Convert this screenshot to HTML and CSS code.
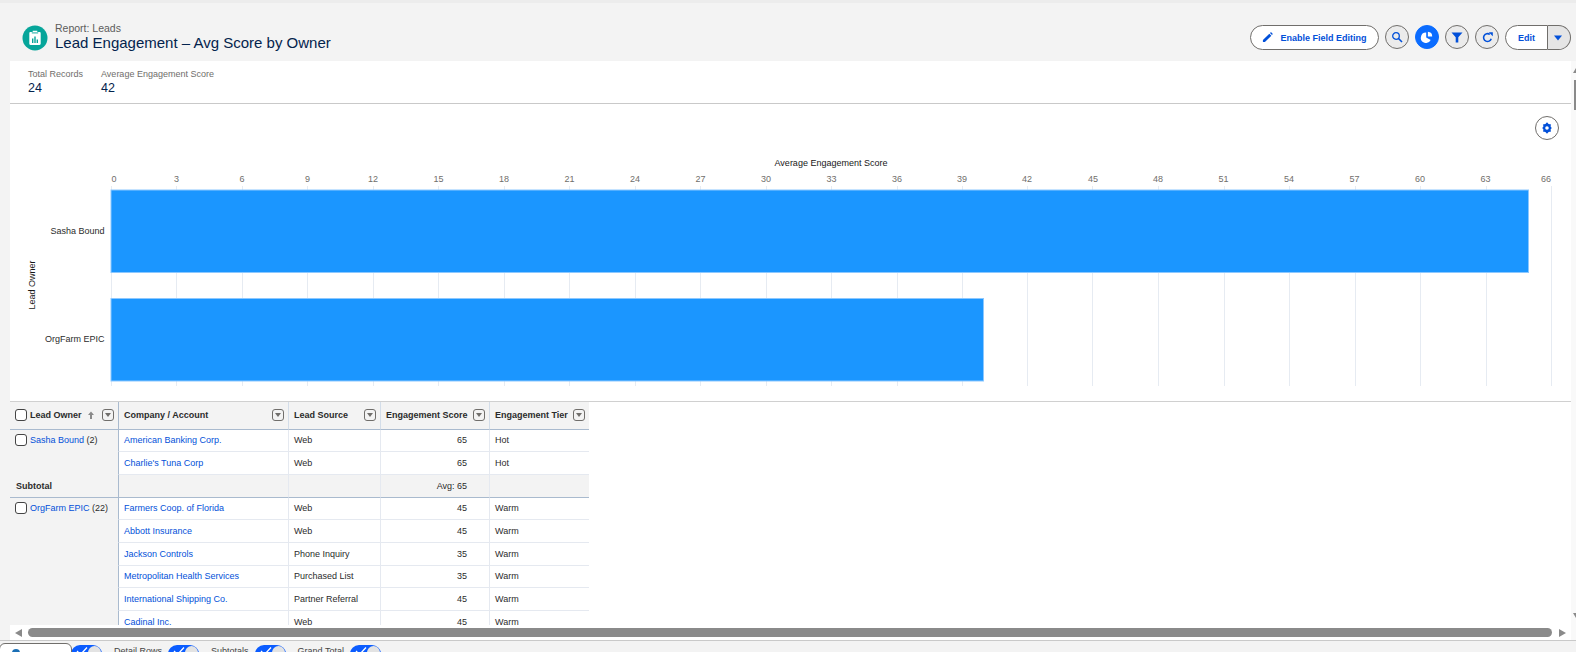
FILE: index.html
```html
<!DOCTYPE html>
<html lang="en">
<head>
<meta charset="utf-8">
<title>Lead Engagement – Avg Score by Owner</title>
<link rel="stylesheet" href="styles.css">
</head>
<body>
<div class="page">
  <header class="page-header">
    <div class="title-group">
      <span class="report-icon">
        <svg viewBox="0 0 26 26" width="26" height="26"><circle cx="13" cy="13" r="12.5" fill="#06a59a"/><path d="M8.5 7h2.2V5.8h4.6V7h2.2c.7 0 1.2.5 1.2 1.2v10.6c0 .7-.5 1.2-1.2 1.2h-9c-.7 0-1.2-.5-1.2-1.2V8.2C7.3 7.500 7.800 7 8.500 7z" fill="#fff"/><rect x="9.800" y="7" width="6.400" height="1.700" fill="#06a59a" opacity=".55"/><path d="M10 13.500h1.400V18H10zM12.300 11.500h1.400V18h-1.400zM14.600 14.500H16V18h-1.400z" fill="#06a59a"/></svg>
      </span>
      <div class="titles">
        <div class="eyebrow">Report: Leads</div>
        <h1 class="title">Lead Engagement – Avg Score by Owner</h1>
      </div>
    </div>
    <div class="actions">
      <button class="btn-pill"><svg viewBox="0 0 12 12" width="11" height="11"><path d="M1 8.800 8 1.800l2.200 2.200-7 7H1zM8.700 1.100l.6-.5c.3-.3.7-.3 1 0l1.100 1.100c.3.300.3.700 0 1l-.5.600z" fill="#0250d9"/></svg>Enable Field Editing</button>
      <button class="btn-round"><svg viewBox="0 0 12 12" width="12" height="12"><circle cx="5" cy="5" r="3.300" fill="none" stroke="#0250d9" stroke-width="1.300"/><path d="M7.500 7.500 11 11" stroke="#0250d9" stroke-width="1.600"/></svg></button>
      <button class="btn-round btn-active"><svg viewBox="0 0 14 14" width="14" height="14"><path d="M6.200 2.600v5l4.500 2.500A5.200 5.200 0 1 1 6.200 2.600z" fill="#fff"/><path d="M7.900 1.800a4.600 4.600 0 0 1 4.300 4.600H7.900z" fill="#fff"/></svg></button>
      <button class="btn-round"><svg viewBox="0 0 14 14" width="14" height="14"><path d="M1.500 2.500h11L8.300 7.200V12.500H5.700V7.200z" fill="#0250d9"/></svg></button>
      <button class="btn-round"><svg viewBox="0 0 14 14" width="13" height="13"><path d="M11 8.300A4.200 4.200 0 1 1 9.500 3.700" fill="none" stroke="#0250d9" stroke-width="1.700"/><path d="M8.300 1.300h4.400v4.400z" fill="#0250d9"/></svg></button>
      <div class="split">
        <button class="split-main">Edit</button>
        <button class="split-caret"><svg viewBox="0 0 10 6" width="10" height="6"><path d="M1 .5h8L5 5.500z" fill="#0250d9"/></svg></button>
      </div>
    </div>
  </header>

  <div class="body-row">
    <main class="content">
      <section class="metrics">
        <div class="metric"><div class="metric-label">Total Records</div><div class="metric-value">24</div></div>
        <div class="metric"><div class="metric-label">Average Engagement Score</div><div class="metric-value">42</div></div>
      </section>

      <section class="chart">
        <button class="chart-gear"><svg viewBox="0 0 12 12" width="12" height="12"><path fill-rule="evenodd" d="M6 .3 7.600 2.100 10.100 2.400 9.500 4.300 10.700 6 9.500 7.700 10.100 9.600 7.600 9.900 6 11.700 4.400 9.900 1.900 9.600 2.500 7.700 1.300 6 2.500 4.300 1.900 2.400 4.400 2.100zM6 4.200a1.800 1.800 0 1 0 0 3.600 1.800 1.800 0 0 0 0-3.600z" fill="#0250d9"/></svg></button>
        <svg class="chart-svg" viewBox="10 104 1561 297" width="1561" height="297">
          <g class="grid">
            <line x1="111.500" x2="111.500" y1="186" y2="386"/><line x1="176.500" x2="176.500" y1="186" y2="386"/><line x1="242.500" x2="242.500" y1="186" y2="386"/><line x1="307.500" x2="307.500" y1="186" y2="386"/><line x1="373.500" x2="373.500" y1="186" y2="386"/><line x1="438.500" x2="438.500" y1="186" y2="386"/><line x1="504.500" x2="504.500" y1="186" y2="386"/><line x1="569.500" x2="569.500" y1="186" y2="386"/><line x1="635.500" x2="635.500" y1="186" y2="386"/><line x1="700.500" x2="700.500" y1="186" y2="386"/><line x1="766.500" x2="766.500" y1="186" y2="386"/><line x1="831.500" x2="831.500" y1="186" y2="386"/><line x1="897.500" x2="897.500" y1="186" y2="386"/><line x1="962.500" x2="962.500" y1="186" y2="386"/><line x1="1027.500" x2="1027.500" y1="186" y2="386"/><line x1="1092.500" x2="1092.500" y1="186" y2="386"/><line x1="1158.500" x2="1158.500" y1="186" y2="386"/><line x1="1224.500" x2="1224.500" y1="186" y2="386"/><line x1="1289.500" x2="1289.500" y1="186" y2="386"/><line x1="1355.500" x2="1355.500" y1="186" y2="386"/><line x1="1420.500" x2="1420.500" y1="186" y2="386"/><line x1="1486.500" x2="1486.500" y1="186" y2="386"/><line x1="1551.500" x2="1551.500" y1="186" y2="386"/>
          </g>
          <rect class="bar" x="111" y="190" width="1417.500" height="82.500"/>
          <rect class="bar" x="111" y="298.500" width="872.500" height="82.500"/>
          <g class="ticks">
            <text x="111.500">0</text><text class="mid" x="176.500">3</text><text class="mid" x="242">6</text><text class="mid" x="307.500">9</text><text class="mid" x="373">12</text><text class="mid" x="438.500">15</text><text class="mid" x="504">18</text><text class="mid" x="569.500">21</text><text class="mid" x="635">24</text><text class="mid" x="700.500">27</text><text class="mid" x="766">30</text><text class="mid" x="831.500">33</text><text class="mid" x="897">36</text><text class="mid" x="962">39</text><text class="mid" x="1027">42</text><text class="mid" x="1093">45</text><text class="mid" x="1158">48</text><text class="mid" x="1223.500">51</text><text class="mid" x="1289">54</text><text class="mid" x="1354.500">57</text><text class="mid" x="1420">60</text><text class="mid" x="1485.500">63</text><text class="end" x="1551">66</text>
          </g>
          <text class="axis-title" x="831" y="166">Average Engagement Score</text>
          <text class="cat" x="104.500" y="234">Sasha Bound</text>
          <text class="cat" x="104.500" y="342">OrgFarm EPIC</text>
          <text class="axis-title" transform="translate(35 285) rotate(-90)">Lead Owner</text>
        </svg>
      </section>

      <section class="table-wrap">
        <table class="report">
          <colgroup><col class="c1"><col class="c2"><col class="c3"><col class="c4"><col class="c5"></colgroup>
          <thead>
            <tr>
              <th class="group-col"><div class="th-in"><span class="th-left"><span class="check"></span>Lead Owner<svg class="sort" viewBox="0 0 8 10" width="8" height="10"><path d="M4 1.500 7 5H5v4H3V5H1z" fill="#8a8a8a"/></svg></span><span class="mini"></span></div></th>
              <th class="first"><div class="th-in">Company / Account<span class="mini"></span></div></th>
              <th><div class="th-in">Lead Source<span class="mini"></span></div></th>
              <th><div class="th-in">Engagement Score<span class="mini"></span></div></th>
              <th><div class="th-in">Engagement Tier<span class="mini"></span></div></th>
            </tr>
          </thead>
          <tbody>
            <tr>
              <td class="group-col" rowspan="2"><span class="group-in"><span class="check"></span><span><a href="#">Sasha Bound</a> (2)</span></span></td>
              <td class="first"><a href="#">American Banking Corp.</a></td><td>Web</td><td class="num">65</td><td>Hot</td>
            </tr>
            <tr><td class="first"><a href="#">Charlie's Tuna Corp</a></td><td>Web</td><td class="num">65</td><td>Hot</td></tr>
            <tr class="subtotal"><td class="group-col"><b>Subtotal</b></td><td class="first"></td><td></td><td class="num">Avg: 65</td><td></td></tr>
            <tr>
              <td class="group-col" rowspan="6"><span class="group-in"><span class="check"></span><span><a href="#">OrgFarm EPIC</a> (22)</span></span></td>
              <td class="first"><a href="#">Farmers Coop. of Florida</a></td><td>Web</td><td class="num">45</td><td>Warm</td>
            </tr>
            <tr><td class="first"><a href="#">Abbott Insurance</a></td><td>Web</td><td class="num">45</td><td>Warm</td></tr>
            <tr><td class="first"><a href="#">Jackson Controls</a></td><td>Phone Inquiry</td><td class="num">35</td><td>Warm</td></tr>
            <tr><td class="first"><a href="#">Metropolitan Health Services</a></td><td>Purchased List</td><td class="num">35</td><td>Warm</td></tr>
            <tr><td class="first"><a href="#">International Shipping Co.</a></td><td>Partner Referral</td><td class="num">45</td><td>Warm</td></tr>
            <tr><td class="first"><a href="#">Cadinal Inc.</a></td><td>Web</td><td class="num">45</td><td>Warm</td></tr>
          </tbody>
        </table>
      </section>

      <div class="hscroll">
        <span class="arrow-left"></span>
        <span class="hthumb"></span>
        <span class="arrow-right"></span>
      </div>
    </main>
    <aside class="vscroll">
      <span class="arrow-up"></span>
      <span class="vthumb"></span>
      <span class="arrow-down"></span>
    </aside>
  </div>

  <footer class="footer">
    <div class="tab-btn"><span class="tab-dot"></span></div>
    <span class="toggle first-toggle"><svg viewBox="0 0 12 10" width="12" height="10"><path d="M1 5l3.500 3.500L11 1.500" fill="none" stroke="#fff" stroke-width="1.300"/></svg><i></i></span>
    <span class="foot-label">Detail Rows</span>
    <span class="toggle"><svg viewBox="0 0 12 10" width="12" height="10"><path d="M1 5l3.500 3.500L11 1.500" fill="none" stroke="#fff" stroke-width="1.300"/></svg><i></i></span>
    <span class="foot-label">Subtotals</span>
    <span class="toggle"><svg viewBox="0 0 12 10" width="12" height="10"><path d="M1 5l3.500 3.500L11 1.500" fill="none" stroke="#fff" stroke-width="1.300"/></svg><i></i></span>
    <span class="foot-label">Grand Total</span>
    <span class="toggle"><svg viewBox="0 0 12 10" width="12" height="10"><path d="M1 5l3.500 3.500L11 1.500" fill="none" stroke="#fff" stroke-width="1.300"/></svg><i></i></span>
  </footer>
</div>
</body>
</html>
```
FILE: styles.css
```css
* { box-sizing: border-box; }
html, body { margin: 0; padding: 0; }
body {
  background: #f3f3f3;
  font-family: "Liberation Sans", Arial, sans-serif;
  color: #181818;
  overflow: hidden;
}
button { font-family: inherit; padding: 0; cursor: pointer; }

.page {
  width: 1576px;
  height: 652px;
  display: flex;
  flex-direction: column;
  overflow: hidden;
}

/* Header */
.page-header {
  flex: 0 0 61px;
  border-top: 3px solid #ececec;
  display: flex;
  justify-content: space-between;
  padding: 22px 5px 0 22px;
  background: #f3f3f3;
}
.title-group { display: flex; gap: 7px; align-items: flex-start; }
.report-icon { display: block; width: 26px; height: 26px; }
.report-icon svg { display: block; }
.titles { margin-top: -3px; }
.eyebrow { font-size: 10.500px; line-height: 12px; color: #5c5c5c; }
.title { margin: 0; font-size: 15px; line-height: 18px; font-weight: 400; color: #03234d; }
.actions { display: flex; gap: 6px; align-items: flex-start; }
.btn-pill {
  width: 129px;
  height: 25px;
  border: 1px solid #706e6b;
  border-radius: 13px;
  background: #fff;
  color: #0250d9;
  font-size: 9px;
  font-weight: 700;
  display: flex;
  align-items: center;
  justify-content: center;
  gap: 7px;
}
.btn-round {
  width: 24px;
  height: 24px;
  border: 1px solid #706e6b;
  border-radius: 50%;
  background: #ebebeb;
  display: flex;
  align-items: center;
  justify-content: center;
}
.btn-active { background: #0b6cff; border-color: #0b6cff; }
.split { display: flex; width: 66px; height: 25px; }
.split-main {
  flex: 0 0 43px;
  border: 1px solid #706e6b;
  border-radius: 13px 0 0 13px;
  background: #fff;
  color: #0250d9;
  font-size: 9px;
  font-weight: 700;
}
.split-caret {
  flex: 1;
  border: 1px solid #706e6b;
  border-left: 0;
  border-radius: 0 13px 13px 0;
  background: #e5e5e5;
  display: flex;
  align-items: center;
  justify-content: center;
  padding-right: 2px;
}

/* Body */
.body-row { flex: 0 0 579px; display: flex; }
.content {
  flex: 0 0 1561px;
  margin-left: 10px;
  background: #fff;
  display: flex;
  flex-direction: column;
  min-width: 0;
}
.metrics {
  flex: 0 0 43px;
  display: flex;
  gap: 18px;
  padding: 7px 0 0 18px;
  border-bottom: 1px solid #c9c9c9;
}
.metric-label { font-size: 9px; line-height: 13px; color: #706e6b; }
.metric-value { font-size: 12.500px; line-height: 15px; color: #03234d; }

.chart { flex: 0 0 297px; position: relative; }
.chart-svg { display: block; }
.chart-gear {
  position: absolute;
  left: 1525px;
  top: 12px;
  width: 24px;
  height: 24px;
  border: 1px solid #706e6b;
  border-radius: 50%;
  background: #fff;
  display: flex;
  align-items: center;
  justify-content: center;
}
.grid line { stroke: #e6ebf2; stroke-width: 1; }
.bar { fill: #1b96ff; stroke: #8cc8ff; stroke-width: 1; }
.ticks text { font-size: 9px; fill: #706e6b; text-anchor: start; transform: translateY(182px); }
.ticks text.mid { text-anchor: middle; }
.ticks text.end { text-anchor: end; }
.axis-title { font-size: 9px; fill: #181818; text-anchor: middle; }
.cat { font-size: 9px; fill: #2b2b2b; text-anchor: end; }

/* Table */
.table-wrap {
  flex: 0 0 224px;
  overflow: hidden;
  border-top: 1px solid #d0d0d0;
}
.report {
  border-collapse: separate;
  border-spacing: 0;
  table-layout: fixed;
  width: 579px;
  font-size: 9px;
  color: #2b2b2b;
}
.c1 { width: 108px; }
.c2 { width: 170px; }
.c3 { width: 92px; }
.c4 { width: 109px; }
.c5 { width: 100px; }
.report th {
  height: 27.500px;
  background: #f3f3f3;
  border-left: 1px solid #d3dde9;
  border-bottom: 1px solid #a9bace;
  font-size: 9px;
  font-weight: 700;
  text-align: left;
  padding: 0 4px 0 5px;
  color: #2b2b2b;
}
.report th.first, .report td.first { border-left: 1px solid #a9bace; }
.report th.group-col, .report td.group-col { border-left: 0; }
.th-in { display: flex; align-items: center; justify-content: space-between; }
.th-left { display: flex; align-items: center; }
.sort { margin-left: 5px; }
.report td {
  height: 22.700px;
  padding: 0 5px;
  border-left: 1px solid #e5e9f0;
  border-bottom: 1px solid #e5e9f0;
  white-space: nowrap;
  overflow: hidden;
}
.report td.group-col {
  background: #f3f3f3;
  vertical-align: top;
  border-bottom: 0;
  padding-top: 4px;
}
.report td.num { text-align: right; padding-right: 22px; }
.subtotal td {
  background: #f3f3f3;
  border-bottom: 1px solid #a9bace !important;
}
.subtotal td.group-col { vertical-align: middle; padding: 0 0 0 6px; }
.subtotal b { font-size: 9px; font-weight: 700; }
.group-in { display: flex; align-items: center; gap: 3px; white-space: pre; }
.report a { color: #0250d9; text-decoration: none; }
.check {
  display: inline-block;
  flex: none;
  width: 12px;
  height: 12px;
  border: 1px solid #444;
  border-radius: 3px;
  background: #fff;
  margin-right: 3px;
}
.group-in .check { margin-right: 0; }
.mini {
  flex: none;
  position: relative;
  width: 12px;
  height: 12px;
  border: 1px solid #706e6b;
  border-radius: 3px;
  background: #f3f3f3;
}
.mini::after {
  content: "";
  position: absolute;
  left: 2px;
  top: 3px;
  border-style: solid;
  border-width: 4px 3px 0;
  border-color: #706e6b transparent transparent;
}

/* Scrollbars */
.hscroll {
  flex: 0 0 15px;
  display: flex;
  align-items: center;
  background: #fff;
}
.arrow-left {
  margin-left: 5px;
  border-style: solid;
  border-width: 4.500px 7px 4.500px 0;
  border-color: transparent #8a8a8a transparent transparent;
}
.hthumb {
  width: 1524px;
  height: 9px;
  margin-left: 6px;
  border-radius: 5px;
  background: #8a8a8a;
}
.arrow-right {
  margin-left: 7px;
  border-style: solid;
  border-width: 4.500px 0 4.500px 7px;
  border-color: transparent transparent transparent #8a8a8a;
}
.vscroll {
  flex: 1;
  background: #f9f9f9;
  position: relative;
  overflow: hidden;
}
.arrow-up {
  position: absolute;
  left: 2px;
  top: 7px;
  border-style: solid;
  border-width: 0 3px 5px;
  border-color: transparent transparent #8a8a8a;
}
.vthumb {
  position: absolute;
  left: 3px;
  top: 19px;
  width: 2px;
  height: 30px;
  background: #8a8a8a;
}
.arrow-down {
  position: absolute;
  left: 2px;
  top: 552px;
  border-style: solid;
  border-width: 5px 3px 0;
  border-color: #8a8a8a transparent transparent;
}

/* Footer */
.footer {
  flex: 0 0 12px;
  border-top: 1px solid #c9c9c9;
  background: #f3f3f3;
  display: flex;
  align-items: flex-start;
  padding-top: 2px;
  overflow: hidden;
  white-space: nowrap;
}
.tab-btn {
  flex: 0 0 73px;
  height: 24px;
  margin-left: -1px;
  background: #fff;
  border: 1px solid #706e6b;
  border-radius: 6px;
  position: relative;
  z-index: 1;
}
.tab-dot {
  position: absolute;
  left: 12px;
  top: 5px;
  width: 8px;
  height: 8px;
  border-radius: 50%;
  background: #1b6fb5;
}
.toggle {
  flex: none;
  width: 31px;
  height: 18px;
  border-radius: 9px;
  background: #0b5cff;
  position: relative;
  display: block;
  margin-top: 2px;
}
.toggle.first-toggle { margin-left: -1px; }
.toggle svg { position: absolute; left: 5px; top: 1px; }
.toggle i {
  position: absolute;
  right: 1px;
  top: 1px;
  width: 13px;
  height: 13px;
  border-radius: 50%;
  background: #e3e3e3;
}
.foot-label {
  flex: none;
  font-size: 9px;
  line-height: 14px;
  color: #444;
  margin: 1px 6px 0 12px;
}
```
